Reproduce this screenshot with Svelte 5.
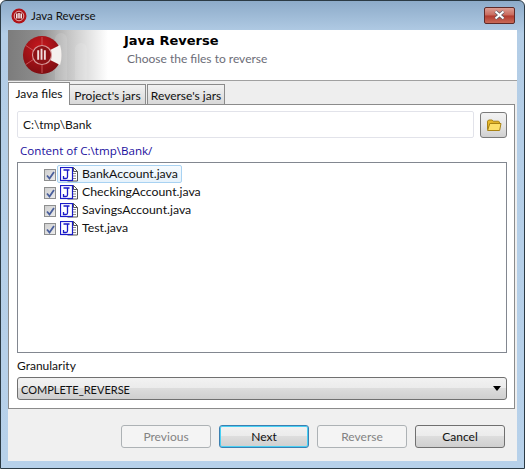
<script lang="ts">
	const files = [
		{ name: 'BankAccount.java', selected: true },
		{ name: 'CheckingAccount.java', selected: false },
		{ name: 'SavingsAccount.java', selected: false },
		{ name: 'Test.java', selected: false }
	]
	const tabs = ['Java files', "Project's jars", "Reverse's jars"]
	const buttons = [
		{ label: 'Previous', kind: 'disabled' },
		{ label: 'Next', kind: 'focused' },
		{ label: 'Reverse', kind: 'disabled' },
		{ label: 'Cancel', kind: '' }
	]
</script>

<div class="window">
	<div class="titlebar">
		<svg class="app-icon" width="16" height="16" viewBox="0 0 16 16">
			<circle cx="8" cy="8" r="7.5" fill="#b01218" />
			<circle cx="8" cy="8" r="4.8" fill="#8e1014" stroke="#e8b0b0" stroke-width="1" />
			<path d="M5.8 5.5v5M8 5v5.5M10.200 5.5v5" stroke="#fff" stroke-width="1.400" />
		</svg>
		<span class="title">Java Reverse</span>
		<div class="close">
			<svg width="13" height="10" viewBox="0 0 13 10">
				<path d="M2.5 1.5l8 7M10.5 1.5l-8 7" stroke="#5a5f68" stroke-width="3.400" />
				<path d="M2.5 1.5l8 7M10.5 1.5l-8 7" stroke="#fff" stroke-width="2" />
			</svg>
		</div>
	</div>

	<div class="client">
		<header class="banner">
			<div class="banner-art">
				<span class="streak s1"></span>
				<span class="streak s2"></span>
				<svg class="logo" width="40" height="40" viewBox="0 0 42 42">
					<defs>
						<radialGradient id="disc" cx="45%" cy="30%" r="75%">
							<stop offset="0" stop-color="#c8181e" />
							<stop offset="1" stop-color="#7a0c10" />
						</radialGradient>
					</defs>
					<circle cx="21" cy="21" r="20" fill="url(#disc)" />
					<path d="M21 2v9M4 11l9 6M4 31l9-6M21 31v9" stroke="#c9565a" stroke-width="1" />
					<path d="M29 16L40 10.500Q43 21 40 31.500L29 26Z" fill="#f4f1ee" />
					<circle cx="21" cy="21" r="10" fill="#8e1216" stroke="#d89a9a" stroke-width="1.200" />
					<path d="M17 16v10M20.500 14.500v11.500M24 16v10" stroke="#f2dcdc" stroke-width="2" />
				</svg>
			</div>
			<div class="banner-text">
				<h1>Java Reverse</h1>
				<p>Choose the files to reverse</p>
			</div>
		</header>

		<div class="tabstrip">
			{#each tabs as tab, i}
				<div class="tab" class:active={i === 0}>{tab}</div>
			{/each}
		</div>

		<div class="panel">
			<div class="path-row">
				<div class="path-input">C:\tmp\Bank</div>
				<div class="folder-btn">
					<svg width="16" height="14" viewBox="0 0 16 14">
						<path d="M1.500 11.500V3.200L2.600 2h3.600l1 1.200h5.400l.8.8v1.400H4.800Z" fill="#e8b92c" stroke="#a98314" stroke-width="1" />
						<path d="M1.600 12.500L3.800 5.500H15L13.600 12.500Z" fill="#fde06a" stroke="#a98314" stroke-width="1" stroke-linejoin="round" />
					</svg>
				</div>
			</div>

			<div class="content-label">Content of C:\tmp\Bank/</div>

			<div class="tree">
				{#each files as file}
					<div class="tree-row">
						<span class="check">
							<svg width="9" height="9" viewBox="0 0 9 9">
								<path d="M1 4.500l2.500 3L8 1" fill="none" stroke="#4a5f9c" stroke-width="1.800" />
							</svg>
						</span>
						<svg class="file-icon" width="19" height="15" viewBox="0 0 19 15">
							<path d="M7.500 .5h6l4 4v9.500h-10z" fill="#fff" stroke="#555" />
							<path d="M13.500 .5v4h4" fill="none" stroke="#555" />
							<path d="M13 6.500h3M13 9h3M13 11.500h3" stroke="#888" />
							<rect x=".5" y=".5" width="12" height="13" fill="#fff" stroke="#1a1ac8" stroke-width="1.200" />
							<path d="M3.500 3h6M7.500 3v7q0 1.500-1.500 1.500H3.500V9" fill="none" stroke="#1a1ac8" stroke-width="1.300" />
						</svg>
						<span class="file-name" class:selected={file.selected}>{file.name}</span>
					</div>
				{/each}
			</div>

			<div class="granularity-label">Granularity</div>
			<div class="combo">
				<span class="combo-value">COMPLETE_REVERSE</span>
				<span class="arrow"></span>
			</div>
		</div>

		<footer class="footer">
			{#each buttons as b}
				<div class="btn {b.kind}">{b.label}</div>
			{/each}
		</footer>
	</div>
</div>

<style>
	:global(body) {
		margin: 0;
		background: #fff;
	}

	.window {
		box-sizing: border-box;
		width: 525px;
		height: 469px;
		display: flex;
		flex-direction: column;
		padding: 0 8px 7px;
		border: 1px solid #2b3a44;
		border-radius: 6px 6px 0 0;
		background: linear-gradient(180deg, #8dabc9 0%, #b3cde6 7%, #b7d1ea 100%);
		font-family: 'Lato', 'Open Sans', sans-serif;
		font-size: 12px;
		color: #111;
		overflow: hidden;
	}

	.titlebar {
		flex: none;
		height: 29px;
		margin: 0 -7px;
		padding: 0 8px 0 9px;
		display: flex;
		align-items: center;
		gap: 4px;
	}

	.title {
		color: #111;
		font-size: 11.5px;
	}

	.close {
		margin-left: auto;
		margin-top: -1px;
		width: 31px;
		height: 17px;
		box-sizing: border-box;
		border: 1px solid #5e2a28;
		border-radius: 2px;
		background: linear-gradient(180deg, #dd9e93 0%, #c8695c 48%, #b13a2e 52%, #c96a58 100%);
		display: flex;
		align-items: center;
		justify-content: center;
	}

	.client {
		flex: 1;
		margin-left: -1px;
		margin-right: -1px;
		display: flex;
		flex-direction: column;
		background: #f0f0f0;
		min-height: 0;
	}

	.banner {
		flex: none;
		height: 50px;
		display: flex;
		background: #fff;
		border-bottom: 1px solid #a0a0a0;
	}

	.banner-art {
		position: relative;
		width: 100px;
		flex: none;
		background: linear-gradient(90deg, #7c7c7c 0%, #8c8c8c 30%, #c4c4c4 60%, #ffffff 100%);
		overflow: hidden;
	}

	.streak {
		position: absolute;
		background: rgba(255, 255, 255, 0.12);
		border-radius: 6px 6px 0 0;
		bottom: 0;
		width: 12px;
	}

	.s1 {
		left: 47px;
		height: 47px;
	}

	.s2 {
		left: 67px;
		height: 37px;
	}

	.logo {
		position: absolute;
		left: 14px;
		top: 5px;
	}

	.banner-text {
		margin-left: 16px;
		padding-top: 3px;
	}

	h1 {
		margin: 0;
		font-family: 'DejaVu Sans', sans-serif;
		font-size: 13px;
		font-weight: bold;
		line-height: 15px;
		color: #000;
	}

	.banner-text p {
		margin: 3px 0 0 3px;
		line-height: 16px;
		color: #6d6d78;
	}

	.tabstrip {
		flex: none;
		height: 23px;
		display: flex;
		align-items: flex-end;
		background: #eeeeee;
	}

	.tab {
		box-sizing: border-box;
		height: 20px;
		width: 78px;
		padding-top: 1px;
		display: flex;
		align-items: center;
		justify-content: center;
		white-space: nowrap;
		border: 1px solid #8b8b8b;
		border-bottom: none;
		margin-left: 1px;
		background: linear-gradient(180deg, #f2f2f2, #d8d8d8);
		color: #111;
	}

	.tab.active {
		height: 23px;
		width: 62px;
		padding: 0 0 2px;
		margin-left: 0;
		background: #fff;
		margin-bottom: -1px;
		position: relative;
		z-index: 1;
	}

	.tab:nth-child(2) {
		margin-left: 0;
		width: 76px;
		border-left: none;
	}

	.panel {
		flex: none;
		box-sizing: border-box;
		height: 305px;
		width: 507px;
		padding: 6px 7px 0 8px;
		border: 1px solid #8b8b8b;
		background: #fff;
		display: flex;
		flex-direction: column;
	}

	.path-row {
		display: flex;
		align-items: center;
		gap: 6px;
		height: 27px;
	}

	.path-input {
		flex: 1;
		box-sizing: border-box;
		height: 27px;
		padding: 0 5px;
		display: flex;
		align-items: center;
		border: 1px solid #e2e3ea;
		border-radius: 2px;
		background: #fff;
	}

	.folder-btn {
		box-sizing: border-box;
		width: 27px;
		height: 26px;
		border: 1px solid #7a7a7a;
		border-radius: 3px;
		background: linear-gradient(180deg, #f2f2f2 0%, #e6e6e6 50%, #d0d0d0 100%);
		display: flex;
		align-items: center;
		justify-content: center;
	}

	.content-label {
		margin: 5px 0 0 3px;
		height: 17px;
		line-height: 15px;
		font-family: 'Open Sans', sans-serif;
		font-size: 11.6px;
		color: #1b0f9e;
	}

	.tree {
		box-sizing: border-box;
		margin-top: 2px;
		height: 191px;
		padding: 2px 0 0 26px;
		border: 1px solid #828790;
		background: #fff;
	}

	.tree-row {
		display: flex;
		align-items: center;
		height: 18px;
	}

	.check {
		box-sizing: border-box;
		width: 12px;
		height: 12px;
		margin: 2px 3px 0 0;
		border: 1px solid #8e8f8f;
		background: linear-gradient(135deg, #cfcfcf, #ececec);
		display: flex;
		align-items: center;
		justify-content: center;
		flex: none;
	}

	.file-icon {
		flex: none;
		position: relative;
		z-index: 1;
		margin-left: 1px;
	}

	.file-name {
		margin-left: 0;
		padding: 0 3px 0 2px;
		height: 18px;
		line-height: 16px;
		font-size: 12.3px;
		box-sizing: border-box;
		border: 1px solid transparent;
		border-radius: 2px;
		white-space: nowrap;
	}

	.file-name.selected {
		border-color: #a8d2f2;
		background: linear-gradient(180deg, #f6fbfe, #e6f2fb);
		margin-left: -22px;
		padding-left: 24px;
	}

	.granularity-label {
		margin-top: 3px;
		height: 21px;
		line-height: 20px;
	}

	.combo {
		box-sizing: border-box;
		height: 23px;
		padding: 0 3px 0 3px;
		display: flex;
		align-items: center;
		justify-content: space-between;
		border: 1px solid #707070;
		border-radius: 3px;
		background: linear-gradient(180deg, #f2f2f2 0%, #ebebeb 49%, #dcdcdc 50%, #cfcfcf 100%);
	}

	.combo-value {
		font-size: 11px;
		padding-top: 1px;
	}

	.arrow {
		width: 0;
		height: 0;
		margin-right: 2px;
		border-left: 4px solid transparent;
		border-right: 4px solid transparent;
		border-top: 5px solid #000;
	}

	.footer {
		flex: 1;
		padding: 16px 12px 0 0;
		display: flex;
		justify-content: flex-end;
		gap: 8px;
	}

	.btn {
		box-sizing: border-box;
		width: 90px;
		height: 23px;
		display: flex;
		align-items: center;
		justify-content: center;
		border: 1px solid #707070;
		border-radius: 3px;
		background: linear-gradient(180deg, #f2f2f2 0%, #ebebeb 49%, #dddddd 50%, #cfcfcf 100%);
	}

	.btn.focused {
		border-color: #3c7fb1;
		box-shadow: inset 0 0 0 1px #48d0f4;
	}

	.btn.disabled {
		border-color: #adb2b5;
		background: #f4f4f4;
		color: #838383;
	}
</style>
